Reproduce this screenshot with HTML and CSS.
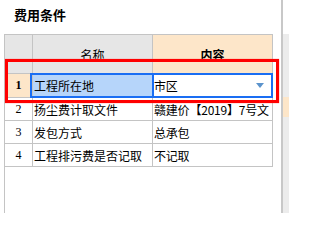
FILE: index.html
```html
<!DOCTYPE html>
<html>
<head>
<meta charset="utf-8">
<link rel="stylesheet" href="styles.css">
</head>
<body>
<div class="page">
  <div class="main">
    <div class="title">费用条件</div>
    <div class="grid-wrap">
      <div class="grid">
        <div class="cell hd"></div>
        <div class="cell hd">名称</div>
        <div class="cell hd hd-content">内容</div>

        <div class="cell num num-sel">1</div>
        <div class="cell name name-sel">工程所在地</div>
        <div class="cell content content-sel">市区<span class="caret"></span></div>

        <div class="cell num">2</div>
        <div class="cell name">扬尘费计取文件</div>
        <div class="cell content">赣建价【2019】7号文</div>

        <div class="cell num">3</div>
        <div class="cell name">发包方式</div>
        <div class="cell content">总承包</div>

        <div class="cell num">4</div>
        <div class="cell name">工程排污费是否记取</div>
        <div class="cell content">不记取</div>
      </div>
    </div>
  </div>
  <div class="side">
    <div class="side-inner">
      <div class="side-peach"></div>
    </div>
  </div>
  <div class="annot"></div>
</div>
</body>
</html>
```
FILE: styles.css
```css
html, body {
  margin: 0;
  padding: 0;
  background: #ffffff;
}

.page {
  position: relative;
  display: flex;
  width: 289px;
  height: 213px;
  overflow: hidden;
  font-family: "Noto Sans CJK SC", "Noto Sans", sans-serif;
  color: #000;
}

.main {
  width: 281px;
  display: flex;
  flex-direction: column;
}

.title {
  height: 34px;
  line-height: 30px;
  padding-left: 14px;
  font-size: 13px;
  font-weight: bold;
  box-sizing: border-box;
}

.grid-wrap {
  flex: 1;
  margin-left: 4px;
  border-left: 1px solid #c4c4c4;
}

.grid {
  display: grid;
  grid-template-columns: 28px 120px 120px;
  grid-template-rows: 39px 24px 23px 23px 23px;
  border-top: 1px solid #c4c4c4;
  width: 268px;
}

.cell {
  box-sizing: border-box;
  border-right: 1px solid #c4c4c4;
  border-bottom: 1px solid #c4c4c4;
  display: flex;
  align-items: center;
  padding-left: 1px;
  font-size: 12px;
  white-space: nowrap;
  overflow: hidden;
}

.hd {
  background: #e6e6e6;
  justify-content: center;
  padding-left: 0;
}

.hd-content {
  background: #fde6c9;
  font-weight: bold;
}

.num {
  justify-content: center;
  padding-left: 0;
  font-family: "Liberation Serif", serif;
  font-size: 12px;
}

.num-sel {
  background: #fde6c9;
  font-weight: bold;
}

.content {
  letter-spacing: -0.2px;
}

.name-sel {
  position: relative;
  overflow: visible;
  background: #b6d5fa;
}

.name-sel::after {
  content: "";
  position: absolute;
  top: -1px;
  left: -3px;
  right: -2px;
  bottom: -1px;
  border: 2px solid #1a6ef3;
}

.content-sel {
  position: relative;
  overflow: visible;
}

.content-sel::after {
  content: "";
  position: absolute;
  top: -1px;
  left: -1px;
  right: -1px;
  bottom: -1px;
  border: 2px solid #1a6ef3;
}

.caret {
  position: absolute;
  right: 8px;
  top: 9px;
  width: 0;
  height: 0;
  border-left: 4px solid transparent;
  border-right: 4px solid transparent;
  border-top: 5px solid #5b93cc;
}

.side {
  width: 8px;
  box-sizing: border-box;
  border-left: 2px solid #c8c8c8;
  display: flex;
  flex-direction: column;
}

.side-inner {
  flex: 1;
  margin-top: 34px;
  background: #ececec;
}

.side-peach {
  margin-top: 63px;
  height: 20px;
  background: #fde6c9;
}

.annot {
  position: absolute;
  left: 5px;
  top: 59px;
  width: 274px;
  height: 44px;
  box-sizing: border-box;
  border: 3px solid #ff0000;
  box-shadow: 0 0 1px #ff6060;
  z-index: 5;
}
```
